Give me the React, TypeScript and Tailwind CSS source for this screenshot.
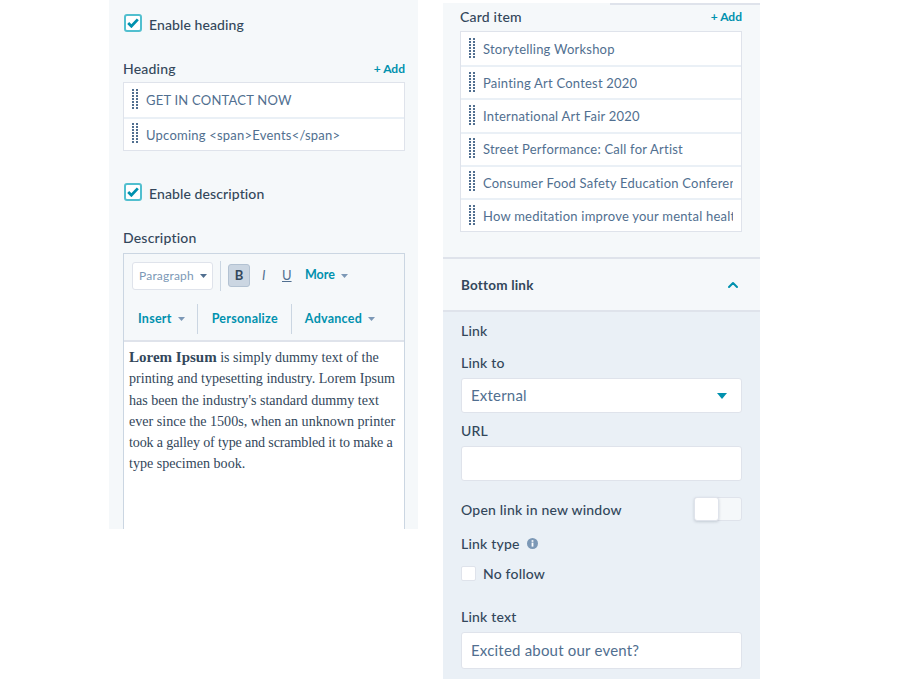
import { ChevronUp } from "lucide-react";

const HEADINGS = ["GET IN CONTACT NOW", "Upcoming <span>Events</span>"];

const CARDS = [
  "Storytelling Workshop",
  "Painting Art Contest 2020",
  "International Art Fair 2020",
  "Street Performance: Call for Artist",
  "Consumer Food Safety Education Conference",
  "How meditation improve your mental health",
];

function Grip() {
  return (
    <svg width="6" height="22" viewBox="0 0 6 22" className="shrink-0" fill="#516f90">
      {[0, 3, 6, 9, 12, 15, 18].map((y) => (
        <g key={y}>
          <rect x="0" y={y} width="2" height="2" />
          <rect x="4" y={y} width="2" height="2" />
        </g>
      ))}
    </svg>
  );
}

function Caret({ color = "#7c98b6" }: { color?: string }) {
  return (
    <svg width="7" height="4" viewBox="0 0 7 4" className="inline-block ml-[6px] align-middle">
      <path d="M0 0h7L3.5 4z" fill={color} />
    </svg>
  );
}

function Check({ label }: { label: string }) {
  return (
    <div className="flex items-center gap-[7px] h-[18px] ml-px">
      <div className="w-[18px] h-[18px] rounded-[3px] border-2 border-[#51bfcf] bg-white flex items-center justify-center">
        <svg width="12" height="10" viewBox="0 0 12 10">
          <path d="M1.2 5l3.2 3.2 6.4-6.8" fill="none" stroke="#0091ae" strokeWidth="2.8" />
        </svg>
      </div>
      <span className="text-[14px] tracking-[0.1px] font-medium text-[#33475b] mt-[2px]">{label}</span>
    </div>
  );
}

function ListBox({ items, rowH }: { items: string[]; rowH: string }) {
  return (
    <div className="border border-[#dfe3eb] bg-white">
      {items.map((item, i) => (
        <div key={item} className={`flex items-center pl-[8px] pr-[8px] gap-[8px] overflow-hidden ${rowH} ${i > 0 ? "border-t-2 border-[#eaf0f6]" : ""}`}>
          <Grip />
          <span className="text-[13px] tracking-[0.22px] text-[#516f90] whitespace-nowrap overflow-hidden pt-[2px]">{item}</span>
        </div>
      ))}
    </div>
  );
}

function LabelRow({ label }: { label: string }) {
  return (
    <div className="flex items-center justify-between h-[18px]">
      <span className="text-[14px] tracking-[0.2px] font-medium text-[#33475b]">{label}</span>
      <span className="text-[12px] font-bold text-[#0091ae] mt-px">+ Add</span>
    </div>
  );
}

function Field({ label, className = "" }: { label: string; className?: string }) {
  return <div className={`text-[14px] tracking-[0.2px] font-medium leading-[18px] text-[#33475b] ${className}`}>{label}</div>;
}

export default function App() {
  return (
    <div className="font-['Lato',sans-serif] w-[905px] h-[679px] bg-white flex items-start overflow-hidden">
      {/* left panel */}
      <div className="ml-[109px] w-[309px] h-[529px] overflow-hidden bg-[#f5f8fa] pl-[14px] pr-[13px] pt-[14px]">
        <Check label="Enable heading" />
        <div className="mt-[27px]">
          <LabelRow label="Heading" />
        </div>
        <div className="mt-[5px]">
          <ListBox items={HEADINGS} rowH="h-[33.5px]" />
        </div>
        <div className="mt-[32px]">
          <Check label="Enable description" />
        </div>
        <Field label="Description" className="mt-[28px]" />
        <div className="mt-[6px] border border-b-0 border-[#cbd6e2] bg-white h-[300px]">
          <div className="bg-[#f5f8fa] border-b-2 border-[#dfe3eb] h-[88px] pl-[8px]">
            <div className="flex items-center h-[40px] pt-[3px]">
              <div className="w-[81px] h-[28px] border border-[#dfe3eb] bg-white rounded-[3px] flex items-center pl-[6px] text-[12px] tracking-[0.2px] text-[#7c98b6]">
                Paragraph
                <Caret color="#516f90" />
              </div>
              <div className="w-px h-[30px] bg-[#cbd6e2] ml-[7px]" />
              <div className="ml-[7px] w-[22px] h-[23px] rounded-[3px] border border-[#b3c2d2] bg-[#cbd6e2] flex items-center justify-center text-[13px] font-bold text-[#33475b]">
                B
              </div>
              <span className="ml-[12px] w-[8px] text-[13px] italic text-[#516f90]">I</span>
              <span className="ml-[12px] w-[8px] text-[13px] underline text-[#516f90]">U</span>
              <span className="ml-[15px] text-[12.5px] font-bold text-[#0091ae]">
                More
                <Caret />
              </span>
            </div>
            <div className="flex items-center h-[30px] mt-[10px] text-[12.5px] tracking-[0.25px] font-bold text-[#0091ae]">
              <span className="ml-[6px]">
                Insert
                <Caret />
              </span>
              <div className="w-px h-[30px] bg-[#cbd6e2] ml-[12px]" />
              <span className="ml-[14px]">Personalize</span>
              <div className="w-px h-[30px] bg-[#cbd6e2] ml-[13px]" />
              <span className="ml-[13px]">
                Advanced
                <Caret />
              </span>
            </div>
          </div>
          <p className="font-['Liberation_Serif',serif] text-[14.1px] leading-[21.3px] text-[#33475b] pl-[5px] pt-[5px] whitespace-nowrap">
            <b className="text-[15px]">Lorem Ipsum</b> is simply dummy text of the
            <br />
            printing and typesetting industry. Lorem Ipsum
            <br />
            has been the industry's standard dummy text
            <br />
            ever since the 1500s, when an unknown printer
            <br />
            <span className="tracking-[-0.15px]">took a galley of type and scrambled it to make a</span>
            <br />
            type specimen book.
          </p>
        </div>
      </div>

      {/* right panel */}
      <div className="ml-[25px] mt-[3px] w-[317px] h-[676px] bg-[#eaf0f6] relative">
        <div className="absolute top-0 right-0 w-[150px] h-[2px] bg-[#dfe3eb]" />
        <div className="bg-[#f5f8fa] h-[256px] pl-[17px] pr-[18px] pt-[4px] border-b-2 border-[#dfe3eb]">
          <LabelRow label="Card item" />
          <div className="mt-[6px]">
            <ListBox items={CARDS} rowH="h-[33.2px]" />
          </div>
        </div>
        <div className="bg-[#f5f8fa] h-[53px] pl-[18px] pr-[19px] pt-px flex items-center justify-between border-b-2 border-[#dfe3eb]">
          <span className="text-[13.5px] tracking-[0.2px] font-bold text-[#33475b]">Bottom link</span>
          <ChevronUp size={16} strokeWidth={3} className="text-[#0091ae]" />
        </div>
        <div className="pl-[18px] pr-[18px]">
          <Field label="Link" className="pt-[10px]" />
          <Field label="Link to" className="mt-[14px]" />
          <div className="mt-[6px] h-[35px] bg-white border border-[#dfe3eb] rounded-[3px] flex items-center justify-between pl-[9px] pr-[14px] text-[15px] tracking-[0.2px] text-[#516f90]">
            External
            <svg width="10" height="6" viewBox="0 0 10 6">
              <path d="M0 0h10L5 6z" fill="#0091ae" />
            </svg>
          </div>
          <Field label="URL" className="mt-[9px]" />
          <div className="mt-[6px] h-[35px] bg-white border border-[#dfe3eb] rounded-[3px]" />
          <div className="mt-[15px] h-[26px] flex items-center justify-between">
            <span className="text-[14px] tracking-[0.2px] font-medium text-[#33475b]">Open link in new window</span>
            <div className="w-[48px] h-[24px] rounded-[3px] border border-[#dfe3eb] bg-[#f5f8fa] relative">
              <div className="absolute -left-px -top-px w-[25px] h-[24px] rounded-[3px] bg-white border border-[#dfe3eb] shadow-[0_1px_3px_rgba(45,62,80,0.2)]" />
            </div>
          </div>
          <div className="mt-[13px] flex items-center gap-[7px]">
            <Field label="Link type" />
            <svg width="11" height="11" viewBox="0 0 11 11" className="-mt-[2px]">
              <circle cx="5.5" cy="5.5" r="5.5" fill="#7c98b6" />
              <rect x="4.6" y="4.6" width="1.8" height="4" fill="#fff" />
              <rect x="4.6" y="2.2" width="1.8" height="1.6" fill="#fff" />
            </svg>
          </div>
          <div className="mt-[10px] flex items-center gap-[7px]">
            <div className="w-[15px] h-[15px] bg-white border border-[#dfe3eb] rounded-[2px]" />
            <span className="text-[14px] tracking-[0.2px] font-medium text-[#33475b]">No follow</span>
          </div>
          <Field label="Link text" className="mt-[24px]" />
          <div className="mt-[6px] h-[37px] bg-white border border-[#dfe3eb] rounded-[3px] flex items-center pl-[9px] text-[15px] tracking-[0.2px] text-[#516f90]">
            Excited about our event?
          </div>
        </div>
      </div>
    </div>
  );
}
